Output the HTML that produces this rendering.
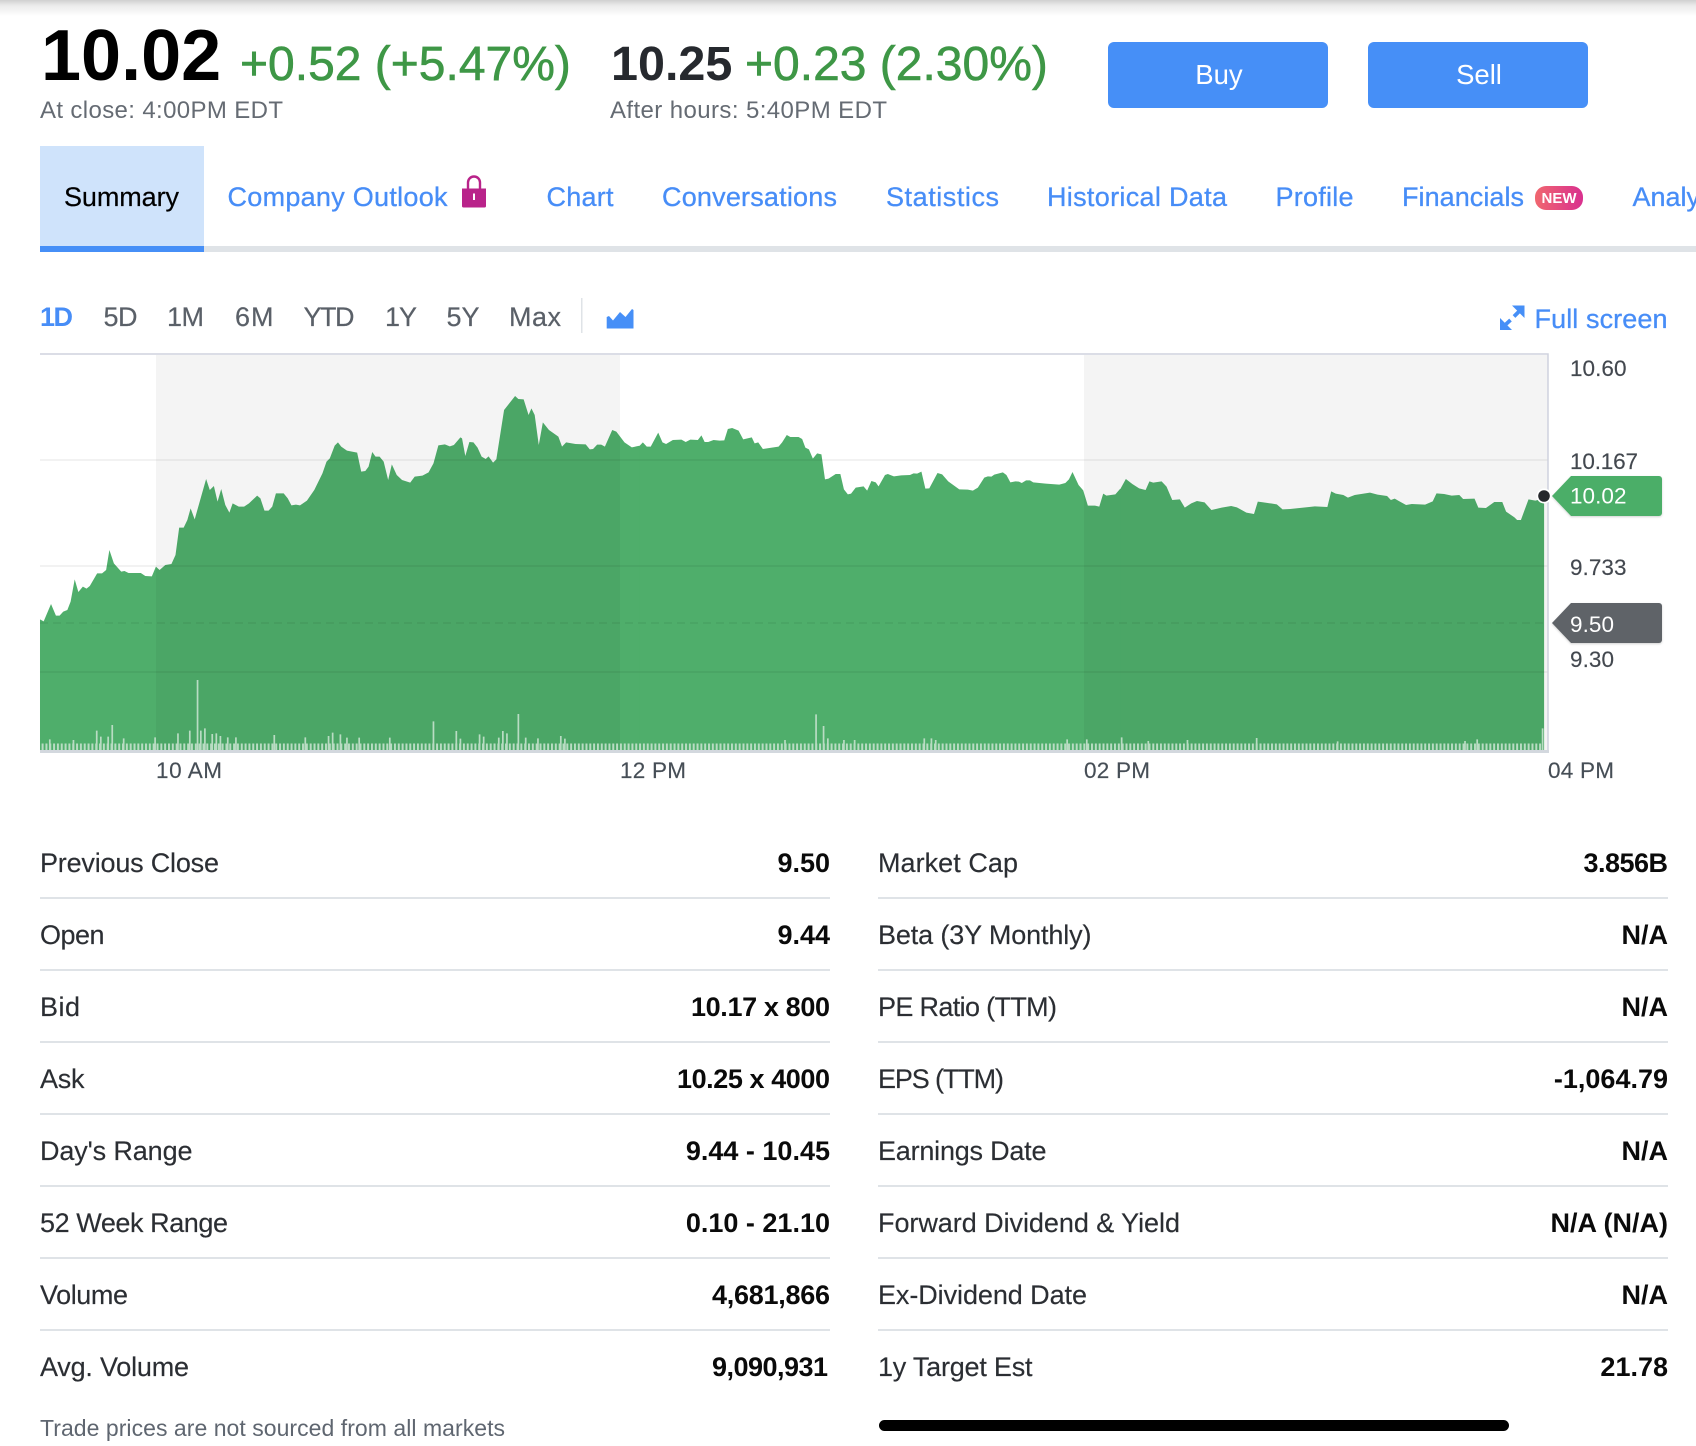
<!DOCTYPE html>
<html lang="en">
<head>
<meta charset="utf-8">
<title>Summary</title>
<style>
html,body{margin:0;padding:0;width:1696px;height:1446px;overflow:hidden;background:#fff}
svg{display:block}
text{font-family:"Liberation Sans",Arial,sans-serif}
.l{font-size:27px;fill:#2b2e33;stroke:#2b2e33;stroke-width:.15px}
.v{font-size:27px;font-weight:700;fill:#0a0a0a;text-anchor:end}
.t{font-size:27px;fill:#478df7;stroke:#478df7;stroke-width:.3px}
.r{font-size:27px;fill:#5a6068;stroke:#5a6068;stroke-width:.2px}
.y{font-size:22.500px;fill:#43484f;stroke:#43484f;stroke-width:.15px}
.x{font-size:22.500px;fill:#464e56;stroke:#464e56;stroke-width:.15px}
.s{font-size:24px;fill:#656b73}
.g{font-size:48px;fill:#3e9746;stroke:#3e9746;stroke-width:.6px}
</style>
</head>
<body>
<svg xmlns="http://www.w3.org/2000/svg" width="1696" height="1446" viewBox="0 0 1696 1446">
<defs>
<linearGradient id="top" x1="0" y1="0" x2="0" y2="1"><stop offset="0" stop-color="#cfcfcf"/><stop offset=".35" stop-color="#ebebeb"/><stop offset="1" stop-color="#fff"/></linearGradient>
<linearGradient id="nw" x1="0" y1="0" x2="1" y2="0"><stop offset="0" stop-color="#f0676f"/><stop offset="1" stop-color="#d9308f"/></linearGradient>
<pattern id="bars" x="41.6" y="0" width="3.83" height="10" patternUnits="userSpaceOnUse"><rect width="2" height="10" fill="#b9dcc3"/></pattern>
<filter id="sh" x="-5%" y="-10%" width="110%" height="125%"><feDropShadow dx="0" dy="1" stdDeviation="1" flood-color="#000" flood-opacity=".18"/></filter>
</defs>

<rect x="0" y="0" width="1696" height="16" fill="url(#top)"/>

<!-- Quote header -->
<text x="41" y="80" font-size="72" font-weight="700" fill="#000">10.02</text>
<text class="g" x="240" y="80">+0.52 (+5.47%)</text>
<text x="611" y="80" font-size="48.500" font-weight="700" fill="#26292e">10.25</text>
<text class="g" x="745" y="80">+0.23 (2.30%)</text>
<text class="s" x="40" y="118" textLength="243">At close: 4:00PM EDT</text>
<text class="s" x="610" y="118" textLength="277">After hours: 5:40PM EDT</text>

<rect x="1108" y="42" width="220" height="66" rx="6" fill="#468ff7"/>
<text x="1219" y="84" font-size="27.500" fill="#fff" text-anchor="middle">Buy</text>
<rect x="1368" y="42" width="220" height="66" rx="6" fill="#468ff7"/>
<text x="1479" y="84" font-size="27.500" fill="#fff" text-anchor="middle">Sell</text>

<!-- Tabs -->
<rect x="40" y="146" width="164" height="100" fill="#cfe3fb"/>
<rect x="40" y="246" width="1656" height="6" fill="#dfe3e7"/>
<rect x="40" y="246" width="164" height="6" fill="#468ff7"/>
<text x="64" y="206" font-size="27" fill="#000" stroke="#000" stroke-width=".2" textLength="115">Summary</text>
<text class="t" x="227.500" y="206" textLength="220">Company Outlook</text>
<path d="M462 188.500H486V206a1.500 1.500 0 0 1-1.500 1.500H463.500a1.500 1.500 0 0 1-1.500-1.500Z" fill="#b9238a"/>
<path d="M468 189.500V182.500a6 6 0 0 1 12 0V189.500" fill="none" stroke="#b9238a" stroke-width="2.400"/>
<rect x="473" y="193.500" width="2" height="6.500" fill="#fff"/>
<text class="t" x="546.500" y="206" textLength="67">Chart</text>
<text class="t" x="662" y="206" textLength="175">Conversations</text>
<text class="t" x="886" y="206" textLength="113">Statistics</text>
<text class="t" x="1047" y="206" textLength="180">Historical Data</text>
<text class="t" x="1275.500" y="206" textLength="78">Profile</text>
<text class="t" x="1402" y="206" textLength="122">Financials</text>
<rect x="1535" y="186" width="48" height="24" rx="11" fill="url(#nw)"/>
<text x="1559" y="203" font-size="15" font-weight="700" fill="#fff" text-anchor="middle">NEW</text>
<text class="t" x="1632.500" y="206">Analysis</text>

<!-- Range selector -->
<text x="40" y="326" font-size="27" font-weight="700" fill="#478df7" textLength="33">1D</text>
<text class="r" x="103.500" y="326" textLength="34">5D</text>
<text class="r" x="167" y="326" textLength="37">1M</text>
<text class="r" x="235" y="326" textLength="38.500">6M</text>
<text class="r" x="303.500" y="326" textLength="51">YTD</text>
<text class="r" x="385" y="326" textLength="32">1Y</text>
<text class="r" x="446.500" y="326" textLength="33">5Y</text>
<text class="r" x="509" y="326" textLength="52">Max</text>
<rect x="581" y="298" width="1.500" height="35" fill="#dfe3e7"/>
<path d="M606.700 317L609 316L613 320.500L620 312L625.500 317L632 309L633.500 310V328.500H606.700Z" fill="#468ff7"/>

<path d="M1512 305.500H1524.500V318Z M1500 318V330H1512Z" fill="#468ff7"/>
<path d="M1503.500 326.500L1510.500 320M1514 316.500L1521 309.500" stroke="#468ff7" stroke-width="3.800" fill="none"/>
<text class="t" x="1534.500" y="328" textLength="133">Full screen</text>

<!-- Chart area -->
<g fill="#4fae6b">
<polygon transform="translate(0,280) scale(.40816,.33333)" points="98,1410 98,1018 107,1024 125,972 137,1007 146,1007 155,995 165,990 173,965 183,898 192,936 203,920 212,926 220,918 238,880 250,880 260,870 268,810 279,850 297,875 305,873 315,879 345,879 356,888 372,889 382,860 391,870 405,855 420,852 430,825 439,743 450,743 459,720 467,685 477,718 505,597 514,630 524,618 533,665 542,627 552,675 562,698 570,670 585,680 598,680 610,670 630,647 638,655 648,692 658,692 667,680 676,640 695,640 705,655 714,676 725,674 735,676 752,662 770,630 790,580 800,545 808,535 820,497 828,487 836,500 850,512 875,518 885,575 895,573 903,560 912,516 920,530 930,530 940,545 951,600 960,553 972,585 985,600 1005,608 1016,590 1035,587 1050,577 1062,550 1074,496 1090,493 1102,499 1112,495 1128,472 1132,475 1140,528 1150,486 1160,487 1170,503 1180,530 1190,537 1197,529 1208,548 1216,538 1235,390 1262,348 1270,357 1283,358 1295,405 1302,385 1310,405 1320,495 1330,427 1345,450 1368,470 1377,500 1387,487 1410,492 1435,493 1445,508 1453,507 1463,494 1473,494 1482,500 1500,450 1510,455 1530,487 1548,502 1568,497 1570,497 1570,1410"/>
<polygon transform="translate(560,380) scale(.35714,.33333)" points="224,1110 224,196 232,187 243,200 254,200 275,158 287,187 297,192 316,180 340,179 352,186 365,179 386,180 396,166 405,186 415,186 430,180 447,182 460,181 470,147 482,144 500,152 513,178 537,172 545,190 555,187 568,207 612,200 622,187 635,165 645,171 668,171 678,177 687,203 697,208 708,236 720,220 732,223 742,298 752,296 772,282 785,282 795,328 806,343 815,341 828,323 850,319 860,332 872,303 884,307 892,319 910,285 918,282 935,289 955,286 980,285 990,280 1000,281 1012,275 1023,326 1034,325 1057,279 1070,283 1087,304 1118,328 1142,329 1156,332 1170,323 1188,293 1198,289 1208,290 1216,284 1240,277 1250,285 1261,307 1275,304 1285,305 1293,309 1305,301 1316,301 1325,307 1360,311 1398,314 1415,309 1425,298 1435,276 1452,315 1465,331 1478,377 1498,377 1510,380 1521,341 1530,347 1555,343 1568,327 1570,327 1570,1110"/>
<polygon transform="translate(1100,280) scale(.38023,.33333)" points="53,1410 53,628 68,597 85,612 103,625 120,630 130,604 140,608 162,604 175,620 190,660 210,658 223,683 240,670 255,663 275,667 293,690 320,683 345,678 360,682 385,698 405,702 415,665 430,667 465,673 480,688 500,687 550,681 565,679 598,681 608,634 620,641 640,645 652,653 670,645 710,638 730,644 755,648 765,660 775,656 805,675 820,672 855,674 875,664 885,640 905,642 925,647 945,645 955,657 985,656 995,683 1015,684 1037,666 1058,666 1068,695 1090,712 1097,720 1107,720 1127,658 1145,662 1168,655 1168,1410"/>
</g>
<rect x="156" y="355" width="464" height="396" fill="#000" fill-opacity=".043"/>
<rect x="1084" y="355" width="464" height="396" fill="#000" fill-opacity=".043"/>
<g fill="none" stroke="#000" stroke-opacity=".065" stroke-width="1.600">
<path d="M40 460H1548M40 566H1548M40 672H1548"/>
<path d="M40 623H1544" stroke-dasharray="8 5"/>
</g>

<!-- Volume -->
<rect x="40" y="743.500" width="1503" height="6.500" fill="url(#bars)"/>
<g fill="none" stroke="#b9dcc3" stroke-width="1.700">
<path vector-effect="non-scaling-stroke" transform="translate(0,280) scale(.40816,.33333)" d="M122 1378V1410M180 1380V1410M237 1352V1410M247 1370V1410M265 1370V1410M275 1335V1410M303 1375V1410M380 1372V1410M436 1360V1410M465 1352V1410M484 1200V1410M492 1352V1410M502 1345V1410M520 1362V1410M530 1360V1410M540 1368V1410M558 1372V1410M578 1372V1410M672 1365V1410M748 1372V1410M805 1368V1410M815 1358V1410M834 1363V1410M850 1373V1410M880 1373V1410M955 1373V1410M1062 1324V1410M1118 1353V1410M1128 1376V1410M1175 1363V1410M1185 1370V1410M1222 1373V1410M1232 1353V1410M1242 1360V1410M1270 1302V1410M1288 1373V1410M1318 1375V1410M1374 1368V1410M1384 1376V1410"/>
<path vector-effect="non-scaling-stroke" transform="translate(560,380) scale(.35714,.33333)" d="M630 1080V1110M717 1003V1110M738 1038V1110M750 1075V1110M795 1080V1110M825 1080V1110M1020 1075V1110M1040 1075V1110M1052 1080V1110M1420 1078V1110M1475 1078V1110"/>
<path vector-effect="non-scaling-stroke" transform="translate(1100,280) scale(.38023,.33333)" d="M57 1372V1410M127 1383V1410M230 1380V1410M412 1374V1410M625 1384V1410M960 1383V1410M992 1378V1410M1164 1345V1410"/>
</g>

<!-- Frame -->
<path d="M40 354H1548V751.500H40" fill="none" stroke="#cfd2de" stroke-width="1.500"/>
<rect x="40" y="750" width="1509" height="3" fill="#d3d8de"/>
<circle cx="1544" cy="496" r="7.500" fill="#fff"/>
<circle cx="1544" cy="496" r="5.800" fill="#26282c"/>

<!-- Y labels -->
<text class="y" x="1570" y="376" textLength="56.500">10.60</text>
<text class="y" x="1570" y="469" textLength="68">10.167</text>
<text class="y" x="1570" y="575" textLength="56.500">9.733</text>
<text class="y" x="1570" y="667" textLength="44">9.30</text>
<path d="M1552 496L1571 476H1659a3 3 0 0 1 3 3V513a3 3 0 0 1-3 3H1571Z" fill="#4cae68" filter="url(#sh)"/>
<text x="1570" y="503.500" font-size="22.500" fill="#fff" textLength="56.500">10.02</text>
<path d="M1552 623L1571 603H1659a3 3 0 0 1 3 3V640a3 3 0 0 1-3 3H1571Z" fill="#5f6368" filter="url(#sh)"/>
<text x="1570" y="632" font-size="22.500" fill="#fff" textLength="44">9.50</text>

<!-- X labels -->
<text class="x" x="156" y="778" textLength="66">10 AM</text>
<text class="x" x="620" y="778" textLength="66">12 PM</text>
<text class="x" x="1084" y="778" textLength="66">02 PM</text>
<text class="x" x="1548" y="778" textLength="66">04 PM</text>

<!-- Stats -->
<g fill="#dfe3e7">
<rect x="40" y="897" width="790" height="2"/><rect x="878" y="897" width="790" height="2"/>
<rect x="40" y="969" width="790" height="2"/><rect x="878" y="969" width="790" height="2"/>
<rect x="40" y="1041" width="790" height="2"/><rect x="878" y="1041" width="790" height="2"/>
<rect x="40" y="1113" width="790" height="2"/><rect x="878" y="1113" width="790" height="2"/>
<rect x="40" y="1185" width="790" height="2"/><rect x="878" y="1185" width="790" height="2"/>
<rect x="40" y="1257" width="790" height="2"/><rect x="878" y="1257" width="790" height="2"/>
<rect x="40" y="1329" width="790" height="2"/><rect x="878" y="1329" width="790" height="2"/>
</g>
<text class="l" x="40" y="872" textLength="179">Previous Close</text><text class="v" x="830" y="872">9.50</text>
<text class="l" x="40" y="944" textLength="64.500">Open</text><text class="v" x="830" y="944">9.44</text>
<text class="l" x="40" y="1016" textLength="40">Bid</text><text class="v" x="830" y="1016" textLength="139">10.17 x 800</text>
<text class="l" x="40" y="1088" textLength="44.500">Ask</text><text class="v" x="830" y="1088" textLength="153">10.25 x 4000</text>
<text class="l" x="40" y="1160" textLength="152.500">Day's Range</text><text class="v" x="830" y="1160">9.44 - 10.45</text>
<text class="l" x="40" y="1232" textLength="188">52 Week Range</text><text class="v" x="830" y="1232">0.10 - 21.10</text>
<text class="l" x="40" y="1304" textLength="88">Volume</text><text class="v" x="830" y="1304" textLength="118">4,681,866</text>
<text class="l" x="40" y="1376" textLength="149">Avg. Volume</text><text class="v" x="828" y="1376" textLength="116">9,090,931</text>

<text class="l" x="878" y="872" textLength="140">Market Cap</text><text class="v" x="1668" y="872" textLength="84.500">3.856B</text>
<text class="l" x="878" y="944" textLength="213.500">Beta (3Y Monthly)</text><text class="v" x="1668" y="944">N/A</text>
<text class="l" x="878" y="1016" textLength="179">PE Ratio (TTM)</text><text class="v" x="1668" y="1016">N/A</text>
<text class="l" x="878" y="1088" textLength="126">EPS (TTM)</text><text class="v" x="1668" y="1088">-1,064.79</text>
<text class="l" x="878" y="1160" textLength="168.500">Earnings Date</text><text class="v" x="1668" y="1160">N/A</text>
<text class="l" x="878" y="1232" textLength="302">Forward Dividend &amp; Yield</text><text class="v" x="1668" y="1232">N/A (N/A)</text>
<text class="l" x="878" y="1304" textLength="209">Ex-Dividend Date</text><text class="v" x="1668" y="1304">N/A</text>
<text class="l" x="878" y="1376" textLength="154.500">1y Target Est</text><text class="v" x="1668" y="1376">21.78</text>

<text x="40" y="1436" font-size="23" fill="#5f6670" textLength="465">Trade prices are not sourced from all markets</text>
<rect x="879" y="1420" width="630" height="11" rx="5.500" fill="#000"/>
</svg>
</body>
</html>
